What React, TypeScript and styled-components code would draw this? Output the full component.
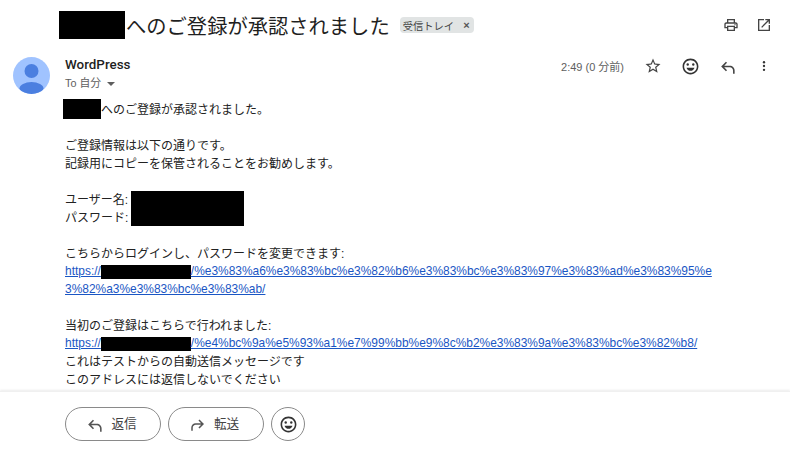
import React from "react";
import styled, { createGlobalStyle } from "styled-components";

const Global = createGlobalStyle`
  html, body { margin: 0; padding: 0; background: #fff; }
  body { width: 790px; height: 453px; overflow: hidden; font-family: "Liberation Sans", "Noto Sans CJK JP", sans-serif; }
  * { box-sizing: border-box; }
`;
const Page = styled.div`
  width: 790px; height: 453px; display: flex; flex-direction: column; color: #222; overflow: hidden;
  font-family: "Liberation Sans", "Noto Sans CJK JP", sans-serif;
`;
const SubjectBar = styled.div`
  height: 50px; display: flex; align-items: center; padding-left: 59px; padding-right: 18px; flex: none;
`;
const Subject = styled.h1`
  margin: 0; font-size: 20.3px; font-weight: 400; color: #1f1f1f; display: flex; align-items: center; white-space: nowrap;
`;
const TitleBlock = styled.span`
  display: block; width: 66px; height: 28px; background: #000; margin-right: 1px;
`;
const Label = styled.span`
  margin-left: 10px; width: 74px; height: 16px; background: #e1e4e4; border-radius: 4px; color: #444; font-size: 10.3px;
  display: flex; align-items: center; padding: 0 0 0 3px; gap: 9px; white-space: nowrap;
`;
const LabelClose = styled.span`
  font-size: 11px; font-weight: 700; color: #555;
`;
const Right = styled.div`
  margin-left: auto; display: flex; align-items: center; gap: 17px; color: #444;
`;
const HeaderRow = styled.div`
  display: flex; padding-left: 13px; height: 44px; flex: none; padding-right: 7.5px; margin-top: 7px;
`;
const Sender = styled.div`
  margin-left: 15px; display: flex; flex-direction: column;
`;
const Name = styled.div`
  font-size: 13.4px; color: #1f1f1f; line-height: 15px; font-family: Roboto, "Liberation Sans", sans-serif; font-weight: 500;
`;
const ToLine = styled.div`
  font-size: 10.8px; color: #5e5e5e; margin-top: 4px; line-height: 14px; display: flex; align-items: center; gap: 6px;
`;
const Caret = styled.span`
  width: 0; height: 0; border-left: 4px solid transparent; border-right: 4px solid transparent; border-top: 4px solid #5e5e5e; margin-top: 2px;
`;
const Meta = styled.div`
  margin-left: auto; display: flex; align-items: center; height: 18px; color: #5e5e5e;
`;
const Time = styled.span`
  font-size: 11px; margin-right: 10.5px; white-space: nowrap;
`;
const IconRow = styled.div`
  display: flex; align-items: center;
`;
const IconSlot = styled.span`
  width: 37px; height: 18px; display: flex; align-items: center; justify-content: center;
`;
const Body = styled.div`
  position: relative; padding-left: 65px; font-size: 12px; line-height: 18px; color: #222; flex: 1; min-height: 0;
`;
const Line = styled.div`
  height: 18px; white-space: nowrap; display: flex; align-items: center;
`;
const Spacer = styled.div`
  height: 18px;
`;
const GreetBlock = styled.span`
  display: block; width: 38px; height: 20px; background: #000; margin: -2px 0 0 -2px; flex: none;
`;
const CredentialBlock = styled.span`
  position: absolute; left: 131px; top: 90px; width: 113px; height: 35px; background: #000;
`;
const Link = styled.a`
  color: #1a56c4; text-decoration: underline; white-space: nowrap; display: inline-flex; align-items: center; font-size: 11.95px; margin-bottom: 2px;
`;
const LinkBlock = styled.span`
  display: inline-block; width: 90px; height: 14px; background: #000; flex: none; margin-top: 2px;
`;
const Footer = styled.div`
  flex: none; height: 62px; box-shadow: 0 -1px 2px rgba(0,0,0,.08); border-top: 1px solid #f0f0f0; display: flex; align-items: flex-start; padding: 15px 0 0 65px; gap: 7px; background: #fff; position: relative;
`;
const Pill = styled.button`
  width: 96px; height: 34px; border: 1px solid #8a8a8a; border-radius: 17px; background: #fff; color: #444; font: inherit; font-size: 12.6px;
  display: flex; align-items: center; justify-content: center; gap: 7px; padding: 0 4px 0 0;
`;
const PillText = styled.span`
  margin-bottom: 3px;
`;
const RoundButton = styled.button`
  width: 34px; height: 34px; border: 1px solid #8a8a8a; border-radius: 50%; background: #fff; display: flex; align-items: center; justify-content: center; padding: 0; color: #333;
`;

const Printer = () => (
  <svg width="16" height="16" viewBox="0 0 24 24" fill="#444"><path d="M19 8h-1V3H6v5H5c-1.66 0-3 1.34-3 3v6h4v4h12v-4h4v-6c0-1.66-1.34-3-3-3zM8 5h8v3H8V5zm8 14H8v-4h8v4zm2-4v-2H6v2H4v-4c0-.55.45-1 1-1h14c.55 0 1 .45 1 1v4h-2z"/><circle cx="18" cy="11.5" r="1"/></svg>
);
const OpenNew = () => (
  <svg width="16" height="16" viewBox="0 0 24 24" fill="#444"><path d="M19 19H5V5h7V3H3v18h18v-9h-2v7zM14 3v2h3.59l-9.83 9.83 1.41 1.41L19 6.41V10h2V3h-7z"/></svg>
);
const Star = () => (
  <svg width="18" height="18" viewBox="0 0 24 24" fill="#444"><path d="M22 9.24l-7.19-.62L12 2 9.19 8.63 2 9.24l5.46 4.73L5.82 21 12 17.27 18.18 21l-1.63-7.03L22 9.24zM12 15.4l-3.76 2.27 1-4.28-3.32-2.88 4.38-.38L12 6.1l1.71 4.04 4.38.38-3.32 2.88 1 4.28L12 15.4z"/></svg>
);
const Smile = ({ size = 19 }: { size?: number }) => (
  <svg width={size} height={size} viewBox="0 0 24 24" fill="#333"><path d="M12 2C6.48 2 2 6.48 2 12s4.48 10 10 10 10-4.48 10-10S17.52 2 12 2zm0 18c-4.41 0-8-3.59-8-8s3.59-8 8-8 8 3.59 8 8-3.59 8-8 8z"/><circle cx="8.5" cy="9.5" r="1.5"/><circle cx="15.5" cy="9.5" r="1.5"/><path d="M7 13.5h10c-.6 2.4-2.6 4-5 4s-4.4-1.6-5-4z"/></svg>
);
const ReplyIcon = ({ size = 19, color = "#444" }: { size?: number; color?: string }) => (
  <svg width={size} height={size} viewBox="0 -2 24 24" fill={color}><path d="M21 19h-2v-4c0-2.2-1.8-4-4-4H7.83l3.59 3.59L10 16l-6-6 6-6 1.41 1.41L7.83 9H15c3.31 0 6 2.69 6 6v4z"/></svg>
);
const ForwardIcon = ({ size = 18, color = "#555" }: { size?: number; color?: string }) => (
  <svg width={size} height={size} viewBox="0 -2 24 24" fill={color}><path d="M3 19h2v-4c0-2.2 1.8-4 4-4h7.17l-3.59 3.59L14 16l6-6-6-6-1.41 1.41L16.17 9H9c-3.31 0-6 2.69-6 6v4z"/></svg>
);
const More = () => (
  <svg width="14" height="16" viewBox="0 0 24 24" fill="#333"><circle cx="12" cy="5.5" r="2"/><circle cx="12" cy="12" r="2"/><circle cx="12" cy="18.5" r="2"/></svg>
);
const Avatar = () => (
  <svg width="37" height="37" viewBox="0 0 37 37" style={{ flex: "none" }}>
    <defs><clipPath id="av"><circle cx="18.5" cy="18.5" r="18.5" /></clipPath></defs>
    <g clipPath="url(#av)">
      <rect width="37" height="37" fill="#a0c3ff" />
      <circle cx="18.5" cy="14" r="7" fill="#4b7fe0" />
      <ellipse cx="18.5" cy="31.5" rx="12" ry="6.5" fill="#4b7fe0" />
    </g>
  </svg>
);

export default function App() {
  return (
    <Page>
      <Global />
      <SubjectBar>
        <Subject>
          <TitleBlock />
          へのご登録が承認されました
        </Subject>
        <Label>受信トレイ<LabelClose>×</LabelClose></Label>
        <Right>
          <Printer />
          <OpenNew />
        </Right>
      </SubjectBar>
      <HeaderRow>
        <Avatar />
        <Sender>
          <Name>WordPress</Name>
          <ToLine>To 自分<Caret /></ToLine>
        </Sender>
        <Meta>
          <Time>2:49 (0 分前)</Time>
          <IconRow>
            <IconSlot><Star /></IconSlot>
            <IconSlot><Smile /></IconSlot>
            <IconSlot><ReplyIcon /></IconSlot>
            <IconSlot><More /></IconSlot>
          </IconRow>
        </Meta>
      </HeaderRow>
      <Body>
        <Line><GreetBlock />へのご登録が承認されました。</Line>
        <Spacer />
        <Line>ご登録情報は以下の通りです。</Line>
        <Line>記録用にコピーを保管されることをお勧めします。</Line>
        <Spacer />
        <Line>ユーザー名:</Line>
        <Line>パスワード:</Line>
        <CredentialBlock />
        <Spacer />
        <Line>こちらからログインし、パスワードを変更できます:</Line>
        <Line><Link href="#">https://<LinkBlock />/%e3%83%a6%e3%83%bc%e3%82%b6%e3%83%bc%e3%83%97%e3%83%ad%e3%83%95%e</Link></Line>
        <Line><Link href="#">3%82%a3%e3%83%bc%e3%83%ab/</Link></Line>
        <Spacer />
        <Line>当初のご登録はこちらで行われました:</Line>
        <Line><Link href="#">https://<LinkBlock />/%e4%bc%9a%e5%93%a1%e7%99%bb%e9%8c%b2%e3%83%9a%e3%83%bc%e3%82%b8/</Link></Line>
        <Line>これはテストからの自動送信メッセージです</Line>
        <Line>このアドレスには返信しないでください</Line>
      </Body>
      <Footer>
        <Pill><ReplyIcon color="#555" /><PillText>返信</PillText></Pill>
        <Pill><ForwardIcon /><PillText>転送</PillText></Pill>
        <RoundButton><Smile /></RoundButton>
      </Footer>
    </Page>
  );
}
